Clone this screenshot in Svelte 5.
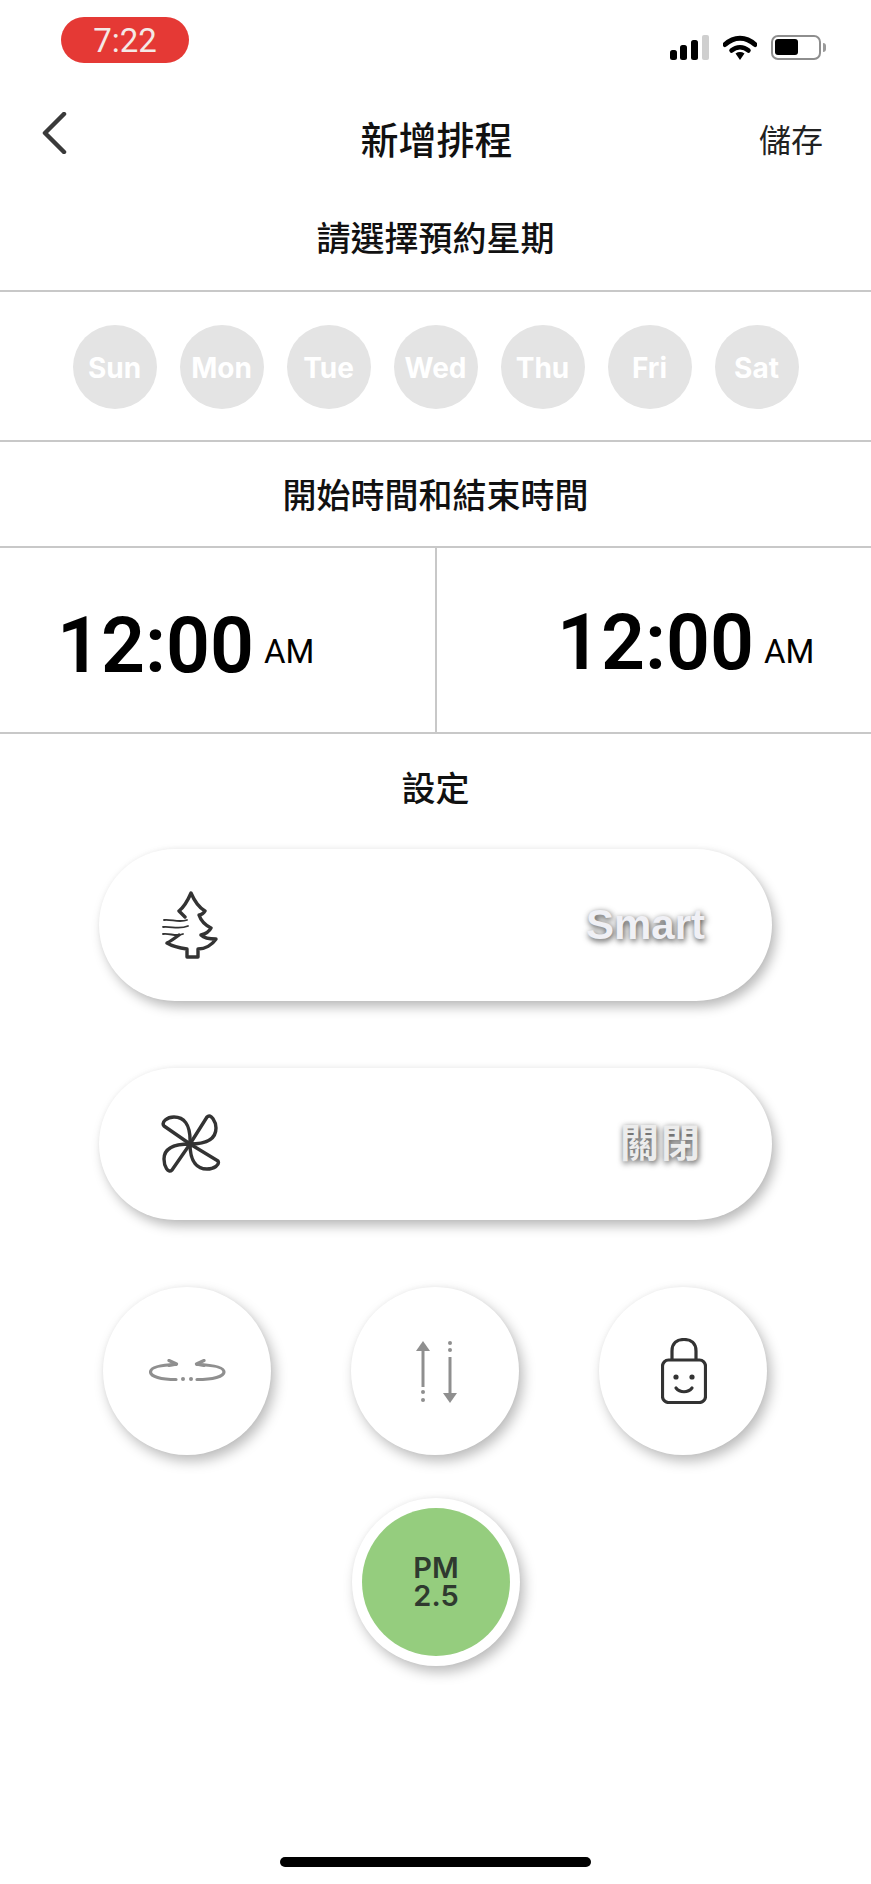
<script>
    const days = ["Sun", "Mon", "Tue", "Wed", "Thu", "Fri", "Sat"];
</script>

<main>
    <div class="status">
        <div class="clock">7:22</div>
        <div class="status-icons">
            <svg class="signal" width="39" height="25" viewBox="0 0 39 25">
                <rect x="0" y="15" width="7" height="10" rx="2.5" fill="#000" />
                <rect x="10" y="10" width="7" height="15" rx="2.5" fill="#000" />
                <rect x="21" y="5" width="7" height="20" rx="2.5" fill="#000" />
                <rect x="32" y="0" width="7" height="25" rx="2" fill="#cfcfcf" />
            </svg>
            <svg class="wifi" width="34" height="25" viewBox="0 0 34 25">
                <path d="M2 9.5C11 1 23 1 32 9.5" fill="none" stroke="#000" stroke-width="5" stroke-linecap="round" />
                <path d="M8.5 15.5C13.5 11 20.5 11 25.5 15.5" fill="none" stroke="#000" stroke-width="4.5" stroke-linecap="round" />
                <path d="M12.5 18.5C15.5 16.6 18.5 16.6 21.5 18.5L17 25Z" fill="#000" />
            </svg>
            <div class="battery">
                <div class="battery-fill"></div>
            </div>
            <div class="battery-nub"></div>
        </div>
    </div>

    <div class="nav">
        <svg class="back" width="26" height="42" viewBox="0 0 26 42">
            <path d="M22 2L3 21L22 40" fill="none" stroke="#3a3a3a" stroke-width="4.5" stroke-linecap="round" stroke-linejoin="round" />
        </svg>
        <div class="title">新增排程</div>
        <div class="save">儲存</div>
    </div>

    <div class="label label-days">請選擇預約星期</div>
    <div class="days">
        {#each days as day}
            <div class="day">{day}</div>
        {/each}
    </div>

    <div class="label label-time">開始時間和結束時間</div>
    <div class="times">
        <div class="time time-start">12:00<span class="ampm">AM</span></div>
        <div class="time time-end">12:00<span class="ampm ampm-end">AM</span></div>
    </div>

    <div class="label label-settings">設定</div>

    <div class="pill">
        <svg class="pill-icon" width="56" height="68" viewBox="0 0 56 68">
            <g fill="none" stroke="#333" stroke-width="3.4" stroke-linejoin="round" stroke-linecap="round">
                <path d="M23 26L17 20C22 16 26 9 29 2C32 9 36 16 43 20C42 22 39 24 37 24C39 30 43 34 49 37C47 41 43 43 39 44C42 47 49 48 54 48C50 54 43 58 36 58V66H25V58C17 57 10 55 5 52C9 50 13 47 17 44" />
                <path d="M2 29C9 28 17 32 25 29" stroke-width="1.8" />
                <path d="M1 36C9 35 17 39 26 35" stroke-width="1.8" />
                <path d="M1 43C8 42 14 46 21 43" stroke-width="1.8" />
            </g>
        </svg>
        <span class="pill-text pill-smart">Smart</span>
    </div>

    <div class="pill pill-fan">
        <svg class="pill-icon fan" width="60" height="60" viewBox="0 0 60 60">
            <g fill="none" stroke="#333" stroke-width="3.4" stroke-linejoin="round">
                <path d="M29 30L3 12C0 8 6 3 13 3C22 3 30 9 29 30Z" />
                <path d="M29 30L46 3C50 -1 55 8 55 14C55 24 47 30 29 30Z" />
                <path d="M29 30L57 47C59 51 53 55 46 55C37 55 29 49 29 30Z" />
                <path d="M29 30L11 56C7 60 3 52 3 45C3 36 11 30 29 30Z" />
            </g>
        </svg>
        <span class="pill-text pill-off">關閉</span>
    </div>

    <div class="round-row">
        <div class="round">
            <svg width="77" height="24" viewBox="0 0 77 24">
                <g fill="none" stroke="#8f8f8f" stroke-width="3.2" stroke-linecap="round" stroke-linejoin="round">
                    <path d="M27 5.5C10 6 1.5 8.5 1.5 13C1.5 17.5 12 20.5 27 20.5" />
                    <path d="M20 1.5L27.5 5L20 6.5" />
                    <path d="M48 5.5C65 6 75 8.5 75 13C75 17.5 64 20.5 48 20.5" />
                    <path d="M55 1.5L47.5 5L55 6.5" />
                </g>
                <circle cx="34" cy="20" r="2" fill="#8f8f8f" />
                <circle cx="42" cy="20" r="2" fill="#8f8f8f" />
            </svg>
        </div>
        <div class="round">
            <svg class="updown" width="42" height="64" viewBox="0 0 42 64">
                <path d="M7 10V47" stroke="#8f8f8f" stroke-width="3" />
                <path d="M7 1L14 11H0Z" fill="#8f8f8f" />
                <circle cx="7" cy="52" r="2" fill="#8f8f8f" />
                <circle cx="7" cy="60" r="2" fill="#8f8f8f" />
                <circle cx="34" cy="3" r="2" fill="#8f8f8f" />
                <circle cx="34" cy="10" r="2" fill="#8f8f8f" />
                <path d="M34 17V54" stroke="#8f8f8f" stroke-width="3" />
                <path d="M34 63L27 53H41Z" fill="#8f8f8f" />
            </svg>
        </div>
        <div class="round">
            <svg class="lock" width="46" height="66" viewBox="0 0 46 66">
                <path d="M11 22V13C11 5 16 1.5 23 1.5C30 1.5 35 5 35 13V22" fill="none" stroke="#333" stroke-width="3.2" />
                <rect x="1.5" y="22" width="43" height="42.5" rx="6" fill="none" stroke="#333" stroke-width="3.2" />
                <circle cx="15" cy="39" r="2.6" fill="#333" />
                <circle cx="31" cy="39" r="2.6" fill="#333" />
                <path d="M15 50C19 55 27 55 31 50" fill="none" stroke="#333" stroke-width="3.2" stroke-linecap="round" />
            </svg>
        </div>
    </div>

    <div class="pm">
        <div class="pm-inner">PM<br />2.5</div>
    </div>

    <div class="home"></div>
</main>

<style>
    :global(body) {
        margin: 0;
        background: #fff;
    }
    main {
        width: 871px;
        height: 1884px;
        overflow: hidden;
        background: #fff;
        font-family: "Noto Sans CJK TC", "Liberation Sans", sans-serif;
        color: #111;
    }
    .status {
        height: 100px;
        box-sizing: border-box;
        padding: 17px 45px 0 61px;
        display: flex;
        justify-content: space-between;
    }
    .clock {
        width: 128px;
        height: 46px;
        border-radius: 23px;
        background: #e53935;
        color: #f4e9e6;
        font-family: "Roboto", sans-serif;
        font-size: 33px;
        line-height: 47px;
        text-align: center;
    }
    .status-icons {
        display: flex;
        align-items: center;
        height: 25px;
        margin-top: 18px;
    }
    .wifi {
        margin-left: 14px;
    }
    .battery {
        margin-left: 14px;
        width: 50px;
        height: 25px;
        box-sizing: border-box;
        border: 2.5px solid #8e8e8e;
        border-radius: 7px;
        padding: 2px;
    }
    .battery-fill {
        width: 23px;
        height: 16px;
        background: #000;
        border-radius: 3px;
    }
    .battery-nub {
        width: 3px;
        height: 9px;
        margin-left: 2px;
        background: #9a9a9a;
        border-radius: 0 3px 3px 0;
    }
    .nav {
        height: 80px;
        display: flex;
        align-items: center;
        justify-content: space-between;
        padding: 0 48px 0 42px;
    }
    .back {
        width: 26px;
        margin-top: -14px;
    }
    .title {
        font-size: 38px;
        font-weight: 500;
        color: #111;
        margin-left: 46px;
        line-height: 80px;
        margin-top: -4px;
    }
    .save {
        font-size: 32px;
        color: #222;
        margin-top: -4px;
    }
    .label {
        text-align: center;
        font-size: 34px;
        font-weight: 500;
        color: #111;
    }
    .label-days {
        height: 112px;
        line-height: 114px;
        box-sizing: border-box;
        border-bottom: 2px solid #c8c8c8;
    }
    .days {
        height: 148px;
        box-sizing: border-box;
        padding-top: 2px;
        display: flex;
        justify-content: center;
        align-items: center;
        gap: 23px;
    }
    .day {
        width: 84px;
        height: 84px;
        border-radius: 50%;
        background: #e4e4e4;
        color: #fff;
        font-family: "Inter", sans-serif;
        font-weight: 700;
        font-size: 28px;
        line-height: 87px;
        text-align: center;
    }
    .label-time {
        height: 108px;
        line-height: 103px;
        box-sizing: border-box;
        border-top: 2px solid #c8c8c8;
        border-bottom: 2px solid #c8c8c8;
    }
    .times {
        height: 184px;
        display: grid;
        grid-template-columns: 437px 1fr;
        border-bottom: 2px solid #c8c8c8;
    }
    .time {
        font-family: "Roboto", sans-serif;
        font-weight: 600;
        font-size: 77px;
        line-height: 88px;
        color: #000;
        white-space: nowrap;
    }
    .time-start {
        padding: 54px 0 0 57px;
        border-right: 2px solid #c8c8c8;
    }
    .time-end {
        padding: 51px 0 0 120px;
    }
    .ampm {
        font-size: 33px;
        font-weight: 400;
        vertical-align: 9px;
        margin-left: 10px;
    }
    .ampm-end {
        vertical-align: 6px;
    }
    .label-settings {
        height: 115px;
        line-height: 106px;
    }
    .pill {
        width: 673px;
        height: 152px;
        margin-left: 99px;
        box-sizing: border-box;
        border-radius: 76px;
        background: #fff;
        box-shadow: 4px 6px 12px rgba(0, 0, 0, 0.27), 0 -1px 4px rgba(0, 0, 0, 0.03);
        display: flex;
        align-items: center;
        justify-content: space-between;
        padding: 0 67px 0 63px;
    }
    .pill-fan {
        margin-top: 67px;
        padding-right: 70px;
    }
    .pill-icon {
        flex-shrink: 0;
    }
    .fan {
        margin-left: -1px;
    }
    .pill-text {
        font-weight: 700;
        color: #f0f0f5;
        text-shadow: 1px 2px 6px rgba(0, 0, 0, 0.75);
    }
    .pill-smart {
        font-family: "Liberation Sans", sans-serif;
        font-size: 42px;
    }
    .pill-off {
        font-size: 39px;
        font-weight: 700;
        letter-spacing: 2px;
        color: #ececec;
        margin-top: -9px;
    }
    .round-row {
        margin: 67px 0 0 103px;
        display: flex;
        gap: 80px;
    }
    .round {
        width: 168px;
        height: 168px;
        border-radius: 50%;
        background: #fff;
        box-shadow: 4px 6px 13px rgba(0, 0, 0, 0.27), 0 -1px 4px rgba(0, 0, 0, 0.03);
        display: flex;
        align-items: center;
        justify-content: center;
    }
    .updown {
        margin: 2px 0 0 4px;
    }
    .lock {
        margin-left: 2px;
    }
    .pm {
        width: 168px;
        height: 168px;
        margin: 43px 0 0 352px;
        box-sizing: border-box;
        padding: 10px;
        border-radius: 50%;
        background: #fff;
        box-shadow: 4px 6px 13px rgba(0, 0, 0, 0.27), 0 -1px 4px rgba(0, 0, 0, 0.03);
    }
    .pm-inner {
        height: 100%;
        border-radius: 50%;
        background: #95cd7e;
        color: #2f3a2f;
        font-family: "Inter", sans-serif;
        font-weight: 600;
        font-size: 29px;
        line-height: 28px;
        text-align: center;
        display: flex;
        align-items: center;
        justify-content: center;
    }
    .home {
        width: 311px;
        height: 10px;
        border-radius: 5px;
        background: #000;
        margin: 191px 0 0 280px;
    }
</style>
